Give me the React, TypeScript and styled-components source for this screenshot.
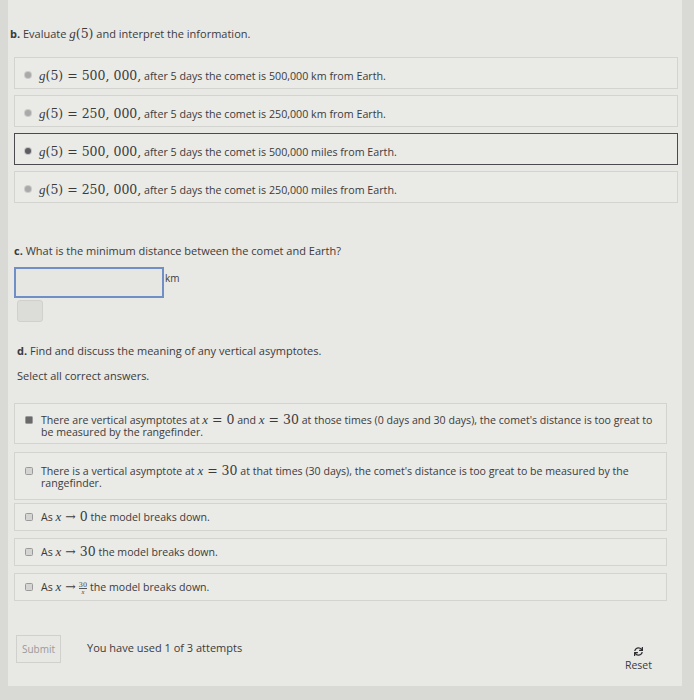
import styled, { createGlobalStyle } from "styled-components";
import { FaSync } from "react-icons/fa";

const Global = createGlobalStyle`
  html, body {
    margin: 0;
    padding: 0;
    background: #d9d9d6;
  }
  body {
    font-family: "Open Sans", "Liberation Sans", sans-serif;
    color: #3b3b3b;
  }
`;

const Page = styled.div`
  width: 694px;
  height: 700px;
  overflow: hidden;
`;

const Panel = styled.div`
  margin-left: 8px;
  width: 674px;
  min-height: 686px;
  background: #e8e8e5;
  box-sizing: border-box;
  padding: 26px 4px 0 2px;
  display: flex;
  flex-direction: column;
  & > * {
    flex-shrink: 0;
  }
`;

const Prompt = styled.div<{ $indent?: number; $mt?: number }>`
  font-size: 11px;
  line-height: 16px;
  padding-left: ${(p) => p.$indent ?? 0}px;
  margin-top: ${(p) => p.$mt ?? 0}px;
  b {
    font-weight: 700;
  }
`;

const Options = styled.div<{ $mt: number; $gap: number; $right: number; $lh: number }>`
  display: flex;
  flex-direction: column;
  gap: ${(p) => p.$gap}px;
  margin-top: ${(p) => p.$mt}px;
  margin-left: 4px;
  margin-right: ${(p) => p.$right}px;
  line-height: ${(p) => p.$lh}px;
`;

const Option = styled.div<{ $selected?: boolean; $h: number; $pt: number; $mb?: number; $fs?: number }>`
  display: flex;
  align-items: flex-start;
  gap: 8px;
  height: ${(p) => p.$h}px;
  margin-bottom: ${(p) => p.$mb ?? 0}px;
  box-sizing: border-box;
  padding: ${(p) => p.$pt}px 6px 0 10px;
  background: #eaeae7;
  border: 1px solid ${(p) => (p.$selected ? "#4a4a4f" : "#d3d3cf")};
  font-size: ${(p) => p.$fs ?? 10.6}px;
`;

const Radio = styled.span<{ $on?: boolean }>`
  flex: none;
  width: 6px;
  height: 6px;
  border-radius: 50%;
  margin-top: 4px;
  background: ${(p) => (p.$on ? "#5e5e62" : "#a9a9a9")};
  box-shadow: 0 0 0 1px ${(p) => (p.$on ? "#c4c4c4" : "#cacac8")};
`;

const Check = styled.span<{ $on?: boolean }>`
  flex: none;
  width: 6px;
  height: 6px;
  border-radius: 1.5px;
  margin-top: 2px;
  border: 1px solid #9a9a9a;
  background: ${(p) => (p.$on ? "#6a6a6a" : "#d4d4d2")};
`;

const Text = styled.span`
  flex: 1;
`;

const M = styled.span`
  font-family: "DejaVu Serif", "Liberation Serif", serif;
  font-size: 12.5px;
  i {
    font-family: "Liberation Serif", serif;
    font-style: italic;
    font-size: 13px;
  }
`;

const Frac = styled.span`
  display: inline-flex;
  flex-direction: column;
  align-items: center;
  vertical-align: middle;
  font-family: "DejaVu Serif", "Liberation Serif", serif;
  font-size: 6.5px;
  line-height: 6px;
  margin: 0 3px;
  span:first-child {
    border-bottom: 0.5px solid #555;
  }
  i {
    font-family: "Liberation Serif", serif;
    font-style: italic;
  }
`;

const AnswerRow = styled.div`
  display: flex;
  align-items: flex-start;
  margin-top: 8px;
  margin-left: 4px;
`;

const Input = styled.div`
  width: 150px;
  height: 31px;
  box-sizing: border-box;
  border: 2px solid #6f8fc6;
  background: #e6e6e3;
`;

const Unit = styled.span`
  font-size: 10px;
  line-height: 14px;
  margin-top: 4px;
  margin-left: 1px;
`;

const Feedback = styled.div`
  width: 26px;
  height: 22px;
  box-sizing: border-box;
  margin: 2px 0 0 7px;
  border-radius: 3px;
  background: #dcdcd9;
  border: 1px solid #d0d0cd;
`;

const Footer = styled.div`
  display: flex;
  align-items: flex-start;
  margin-top: 34px;
  margin-left: 6px;
`;

const Submit = styled.button`
  width: 45px;
  height: 28px;
  background: #e7e7e4;
  border: 1px solid #d0d0cd;
  color: #9a9a9a;
  font-family: "Open Sans", "Liberation Sans", sans-serif;
  font-size: 10px;
  padding: 0;
`;

const Attempts = styled.span`
  font-size: 11px;
  line-height: 14px;
  margin-left: 26px;
  margin-top: 6px;
  flex: 1;
`;

const Reset = styled.div`
  display: flex;
  flex-direction: column;
  align-items: center;
  gap: 3px;
  margin-top: 12px;
  margin-right: 26px;
  font-size: 10.5px;
  line-height: 13px;
  color: #3b3b3b;
  svg {
    color: #2e2e33;
  }
`;

const radioItems = [
  { n: "500, 000", d: "500,000 km" },
  { n: "250, 000", d: "250,000 km" },
  { n: "500, 000", d: "500,000 miles", on: true },
  { n: "250, 000", d: "250,000 miles" },
];

export default function App() {
  return (
    <Page>
      <Global />
      <Panel>
        <Prompt>
          <b>b.</b> Evaluate{" "}
          <M>
            <i>g</i>(5)
          </M>{" "}
          and interpret the information.
        </Prompt>
        <Options $mt={15} $gap={6} $right={0} $lh={15}>
          {radioItems.map((r, i) => (
            <Option key={i} $selected={r.on} $h={32} $pt={10} $fs={10.7}>
              <Radio $on={r.on} />
              <Text>
                <M>
                  <i>g</i>(5) = {r.n},
                </M>{" "}
                after 5 days the comet is {r.d} from Earth.
              </Text>
            </Option>
          ))}
        </Options>

        <Prompt $indent={4} $mt={40}>
          <b>c.</b> What is the minimum distance between the comet and Earth?
        </Prompt>
        <AnswerRow>
          <Input />
          <Unit>km</Unit>
        </AnswerRow>
        <Feedback />

        <Prompt $indent={7} $mt={21}>
          <b>d.</b> Find and discuss the meaning of any vertical asymptotes.
        </Prompt>
        <Prompt $indent={7} $mt={9}>
          Select all correct answers.
        </Prompt>
        <Options $mt={19} $gap={0} $right={11} $lh={12}>
          <Option $h={41} $pt={10} $mb={8}>
            <Check $on />
            <Text>
              There are vertical asymptotes at{" "}
              <M>
                <i>x</i> = 0
              </M>{" "}
              and{" "}
              <M>
                <i>x</i> = 30
              </M>{" "}
              at those times (0 days and 30 days), the comet's distance is too
              great to be measured by the rangefinder.
            </Text>
          </Option>
          <Option $h={48} $pt={12} $mb={3}>
            <Check />
            <Text>
              There is a vertical asymptote at{" "}
              <M>
                <i>x</i> = 30
              </M>{" "}
              at that times (30 days), the comet's distance is too great to be
              measured by the rangefinder.
            </Text>
          </Option>
          <Option $h={28} $pt={7} $mb={7}>
            <Check />
            <Text>
              As{" "}
              <M>
                <i>x</i> → 0
              </M>{" "}
              the model breaks down.
            </Text>
          </Option>
          <Option $h={28} $pt={7} $mb={7}>
            <Check />
            <Text>
              As{" "}
              <M>
                <i>x</i> → 30
              </M>{" "}
              the model breaks down.
            </Text>
          </Option>
          <Option $h={28} $pt={7}>
            <Check />
            <Text>
              As{" "}
              <M>
                <i>x</i> →
              </M>
              <Frac>
                <span>30</span>
                <span>
                  <i>x</i>
                </span>
              </Frac>
              the model breaks down.
            </Text>
          </Option>
        </Options>

        <Footer>
          <Submit>Submit</Submit>
          <Attempts>You have used 1 of 3 attempts</Attempts>
          <Reset>
            <FaSync size={9} />
            <span>Reset</span>
          </Reset>
        </Footer>
      </Panel>
    </Page>
  );
}
